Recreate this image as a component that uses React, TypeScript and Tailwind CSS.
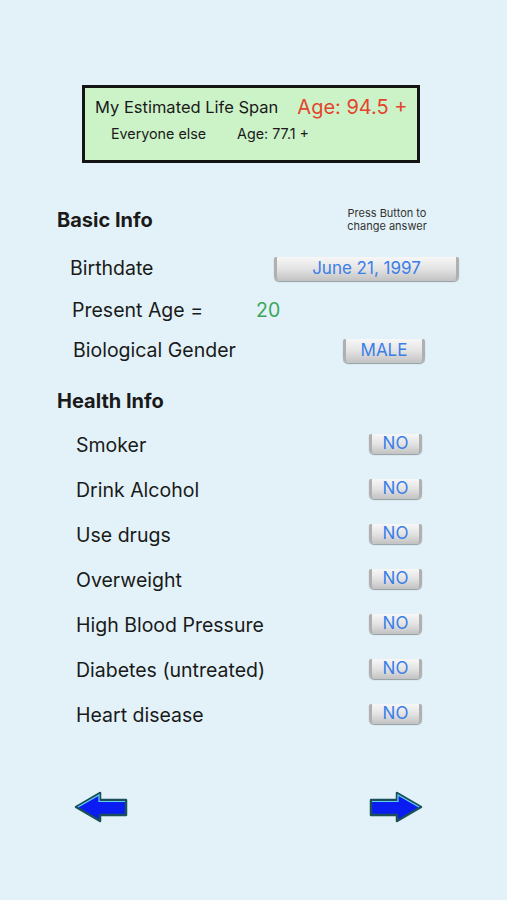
import React from 'react';

const font = { fontFamily: 'Inter, "Liberation Sans", Arial, sans-serif' };

const PillButton = ({ label, className }: { label: string; className: string }) => (
  <button
    className={`flex items-center justify-center rounded-b-[5px] rounded-t-[2px] border-x-[3px] border-x-[#b0b0b0] bg-gradient-to-b from-[#f7f7f7] via-[#e3e3e3] to-[#c2c2c2] text-[#3a7ee8] shadow-[0_1px_1px_rgba(0,0,0,0.35)] ${className}`}
  >
    {label}
  </button>
);

const Arrow = ({ dir }: { dir: 'left' | 'right' }) => (
  <svg width="54" height="32" viewBox="0 0 54 32" className={dir === 'right' ? 'scale-x-[-1]' : ''}>
    <polygon
      points="2,16 26,2 26,9 52,9 52,24 26,24 26,30"
      fill="#0b1cf2"
      stroke="#1b4f5c"
      strokeWidth="2.5"
      strokeLinejoin="round"
    />
    <polyline points="4,16 25,4 25,10.5 51,10.5" fill="none" stroke="#5fd0f0" strokeWidth="1.2" />
  </svg>
);

const healthItems = [
  'Smoker',
  'Drink Alcohol',
  'Use drugs',
  'Overweight',
  'High Blood Pressure',
  'Diabetes (untreated)',
  'Heart disease',
];

export default function App() {
  return (
    <div style={font} className="min-h-[900px] w-full bg-[#e2f2f8] pt-[85px] text-[#1a1a1a]">
      {/* Life span box */}
      <div className="ml-[82px] flex h-[78px] w-[338px] flex-col border-[3px] border-[#141414] bg-[#ccf3c8] pl-[10px]">
        <div className="mt-[4px] flex h-[30px] items-center">
          <span className="text-[16.5px]">My Estimated Life Span</span>
          <span className="ml-[19px] text-[20px] text-[#e5432d]">Age: 94.5 +</span>
        </div>
        <div className="flex h-[24px] items-center pl-[16px] text-[14.3px]">
          <span>Everyone else</span>
          <span className="ml-[31px]">Age: 77.1 +</span>
        </div>
      </div>

      {/* Basic info */}
      <div className="mt-[37px] flex h-[40px] items-center pl-[57px]">
        <span className="w-[288px] text-[20px] font-bold">Basic Info</span>
        <span className="w-[84px] text-center text-[11px] leading-[13px] text-[#333]">
          Press Button to change answer
        </span>
      </div>

      <div className="mt-[9px] flex h-[40px] items-center pl-[70px]">
        <span className="w-[204px] text-[19.5px]">Birthdate</span>
        <PillButton label="June 21, 1997" className="h-[24px] w-[185px] text-[17px]" />
      </div>

      <div className="mt-[2px] flex h-[40px] items-center pl-[72px]">
        <span className="w-[184px] text-[19.5px]">Present Age =</span>
        <span className="text-[19.5px] text-[#3aa65b]">20</span>
      </div>

      <div className="flex h-[40px] items-center pl-[73px]">
        <span className="w-[270px] text-[19.5px]">Biological Gender</span>
        <PillButton label="MALE" className="h-[24px] w-[82px] text-[17px]" />
      </div>

      {/* Health info */}
      <div className="mt-[10px] flex h-[40px] items-center pl-[57px]">
        <span className="text-[20px] font-bold">Health Info</span>
      </div>

      <div className="mt-[2px] flex flex-col">
        {healthItems.map((item) => (
          <div key={item} className="flex h-[45px] items-center pl-[76px]">
            <span className="w-[293px] text-[19.5px]">{item}</span>
            <PillButton label="NO" className="mb-[3px] h-[20px] w-[53px] text-[17px]" />
          </div>
        ))}
      </div>

      {/* Navigation */}
      <div className="mt-[53px] flex items-center justify-between pl-[74px] pr-[84px]">
        <Arrow dir="left" />
        <Arrow dir="right" />
      </div>
    </div>
  );
}
